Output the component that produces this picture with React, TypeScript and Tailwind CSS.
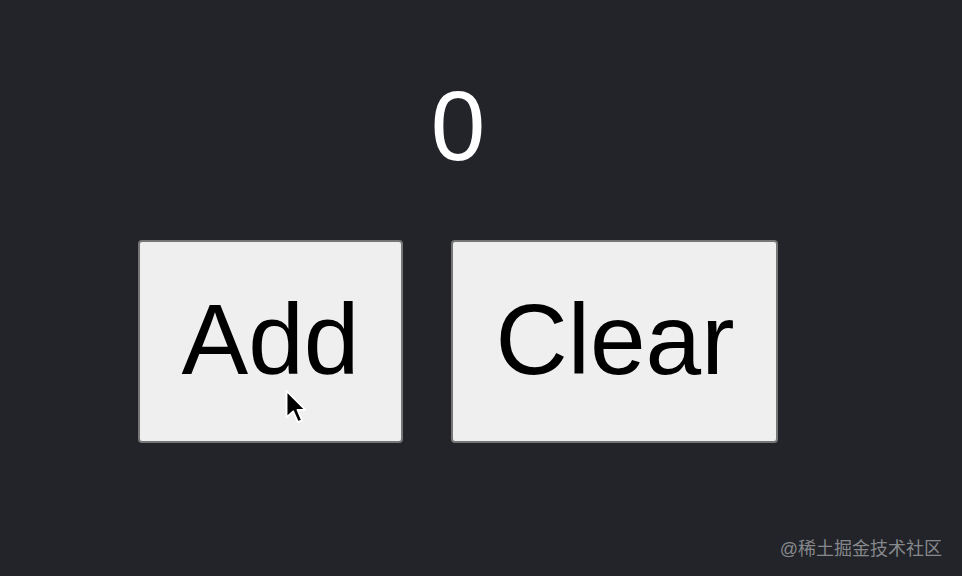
import React, { useState } from 'react';

export default function App() {
  const [count, setCount] = useState(0);

  return (
    <div
      className="relative h-[576px] w-[962px] overflow-hidden bg-[#222429] text-white"
      style={{ fontFamily: '"Liberation Sans", Arial, sans-serif' }}
    >
      <div className="flex flex-col items-center pr-[46px] pt-[70px]">
        {/* Counter */}
        <div className="text-[98px] leading-[113px] text-white">{count}</div>

        {/* Buttons */}
        <div className="mt-[57px] flex gap-[48px]">
          <button
            onClick={() => setCount((c) => c + 1)}
            className="relative rounded-[4px] border-2 border-[#767676] bg-[#efefef] px-[42px] pb-[44px] pt-[40px] text-[100px] leading-[115px] text-black"
          >
            Add
            {/* mouse pointer */}
            <svg
              className="absolute left-[144px] top-[147px] h-[36px] w-[24px]"
              viewBox="0 0 12 19"
            >
              <path
                d="M1 1 L1 15 L4.5 11.8 L7 17.5 L9.2 16.5 L6.8 11 L11 11 Z"
                fill="#000"
                stroke="#fff"
                strokeWidth="1"
                strokeLinejoin="round"
              />
            </svg>
          </button>
          <button
            onClick={() => setCount(0)}
            className="rounded-[4px] border-2 border-[#767676] bg-[#efefef] px-[42px] pb-[44px] pt-[40px] text-[100px] leading-[115px] text-black"
          >
            Clear
          </button>
        </div>
      </div>

      {/* watermark */}
      <div
        className="absolute bottom-[18px] right-[20px] text-[18px] leading-none text-[#86888c]"
        style={{ fontFamily: '"Liberation Sans", "Noto Sans CJK SC", sans-serif' }}
      >
        @稀土掘金技术社区
      </div>
    </div>
  );
}
